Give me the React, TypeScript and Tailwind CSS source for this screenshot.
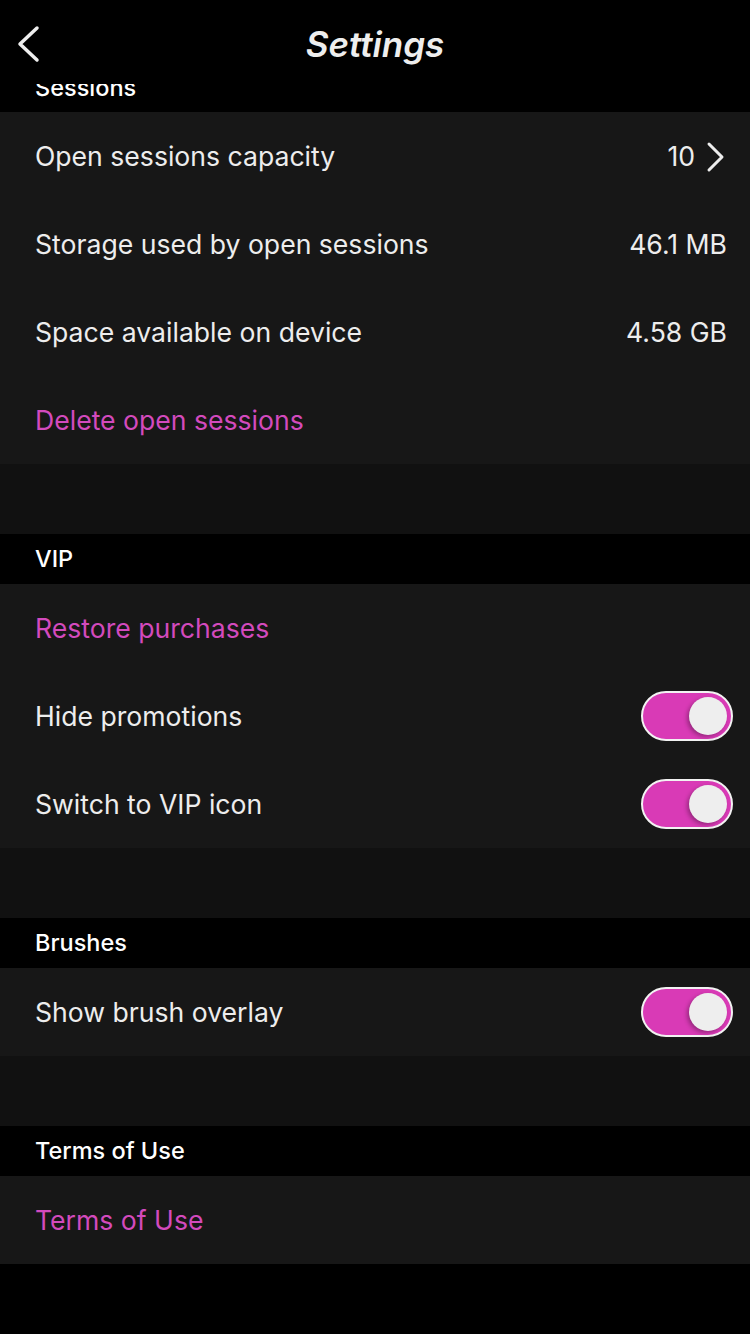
const Toggle = () => (
  <div className="w-[92px] h-[50px] rounded-full bg-[#d93ab6] border-2 border-[#f2f2f2] flex items-center justify-end pr-[4px]">
    <div className="size-[38px] rounded-full bg-[#eeeeee] shadow-[-2px_2px_4px_rgba(0,0,0,0.3)]" />
  </div>
);

const SectionHeader = ({ title }: { title: string }) => (
  <div className="h-[50px] bg-black flex items-center px-[35px] text-[23.5px] font-medium text-white">
    {title}
  </div>
);

const Row = ({
  label,
  pink,
  children,
}: {
  label: string;
  pink?: boolean;
  children?: React.ReactNode;
}) => (
  <div className="h-[88px] flex items-center justify-between pl-[35px] pr-[17px] bg-[#171717]">
    <span className={`text-[26.6px] mt-[2px] ${pink ? "text-[#d34abd]" : "text-[#ededed]"}`}>
      {label}
    </span>
    {children}
  </div>
);

const Value = ({ text }: { text: string }) => (
  <span className="text-[26.6px] mt-[2px] text-[#ededed] pr-[6px]">{text}</span>
);

const Gap = () => <div className="h-[70px] bg-[#111111]" />;

export default function App() {
  return (
    <div
      className="w-[750px] h-[1334px] bg-black overflow-hidden"
      style={{ fontFamily: "Inter, 'Noto Sans', sans-serif" }}
    >
      <div className="h-[84px] relative flex items-center justify-center">
        <svg
          className="absolute left-[14px] top-[24px]"
          width="30"
          height="40"
          viewBox="0 0 30 40"
          fill="none"
          stroke="#eeeeee"
          strokeWidth="3.5"
          strokeLinecap="round"
          strokeLinejoin="round"
        >
          <polyline points="23,4 6,20 23,36" />
        </svg>
        <h1 className="text-[35px] font-semibold italic text-[#eeeeee] mt-[4px]">
          Settings
        </h1>
      </div>
      <div className="h-[28px] overflow-hidden">
        <div className="-mt-[21px]">
          <SectionHeader title="Sessions" />
        </div>
      </div>
      <Row label="Open sessions capacity">
        <div className="flex items-center gap-[10px] text-[#ededed]">
          <span className="text-[26.6px] mt-[2px]">10</span>
          <svg
            width="20"
            height="32"
            viewBox="0 0 20 32"
            fill="none"
            stroke="#ededed"
            strokeWidth="3"
            strokeLinecap="round"
            strokeLinejoin="round"
            className="mr-[8px] mt-[2px]"
          >
            <polyline points="4,3 17,16 4,29" />
          </svg>
        </div>
      </Row>
      <Row label="Storage used by open sessions">
        <Value text="46.1 MB" />
      </Row>
      <Row label="Space available on device">
        <Value text="4.58 GB" />
      </Row>
      <Row label="Delete open sessions" pink />
      <Gap />
      <SectionHeader title="VIP" />
      <Row label="Restore purchases" pink />
      <Row label="Hide promotions">
        <Toggle />
      </Row>
      <Row label="Switch to VIP icon">
        <Toggle />
      </Row>
      <Gap />
      <SectionHeader title="Brushes" />
      <Row label="Show brush overlay">
        <Toggle />
      </Row>
      <Gap />
      <SectionHeader title="Terms of Use" />
      <Row label="Terms of Use" pink />
    </div>
  );
}
